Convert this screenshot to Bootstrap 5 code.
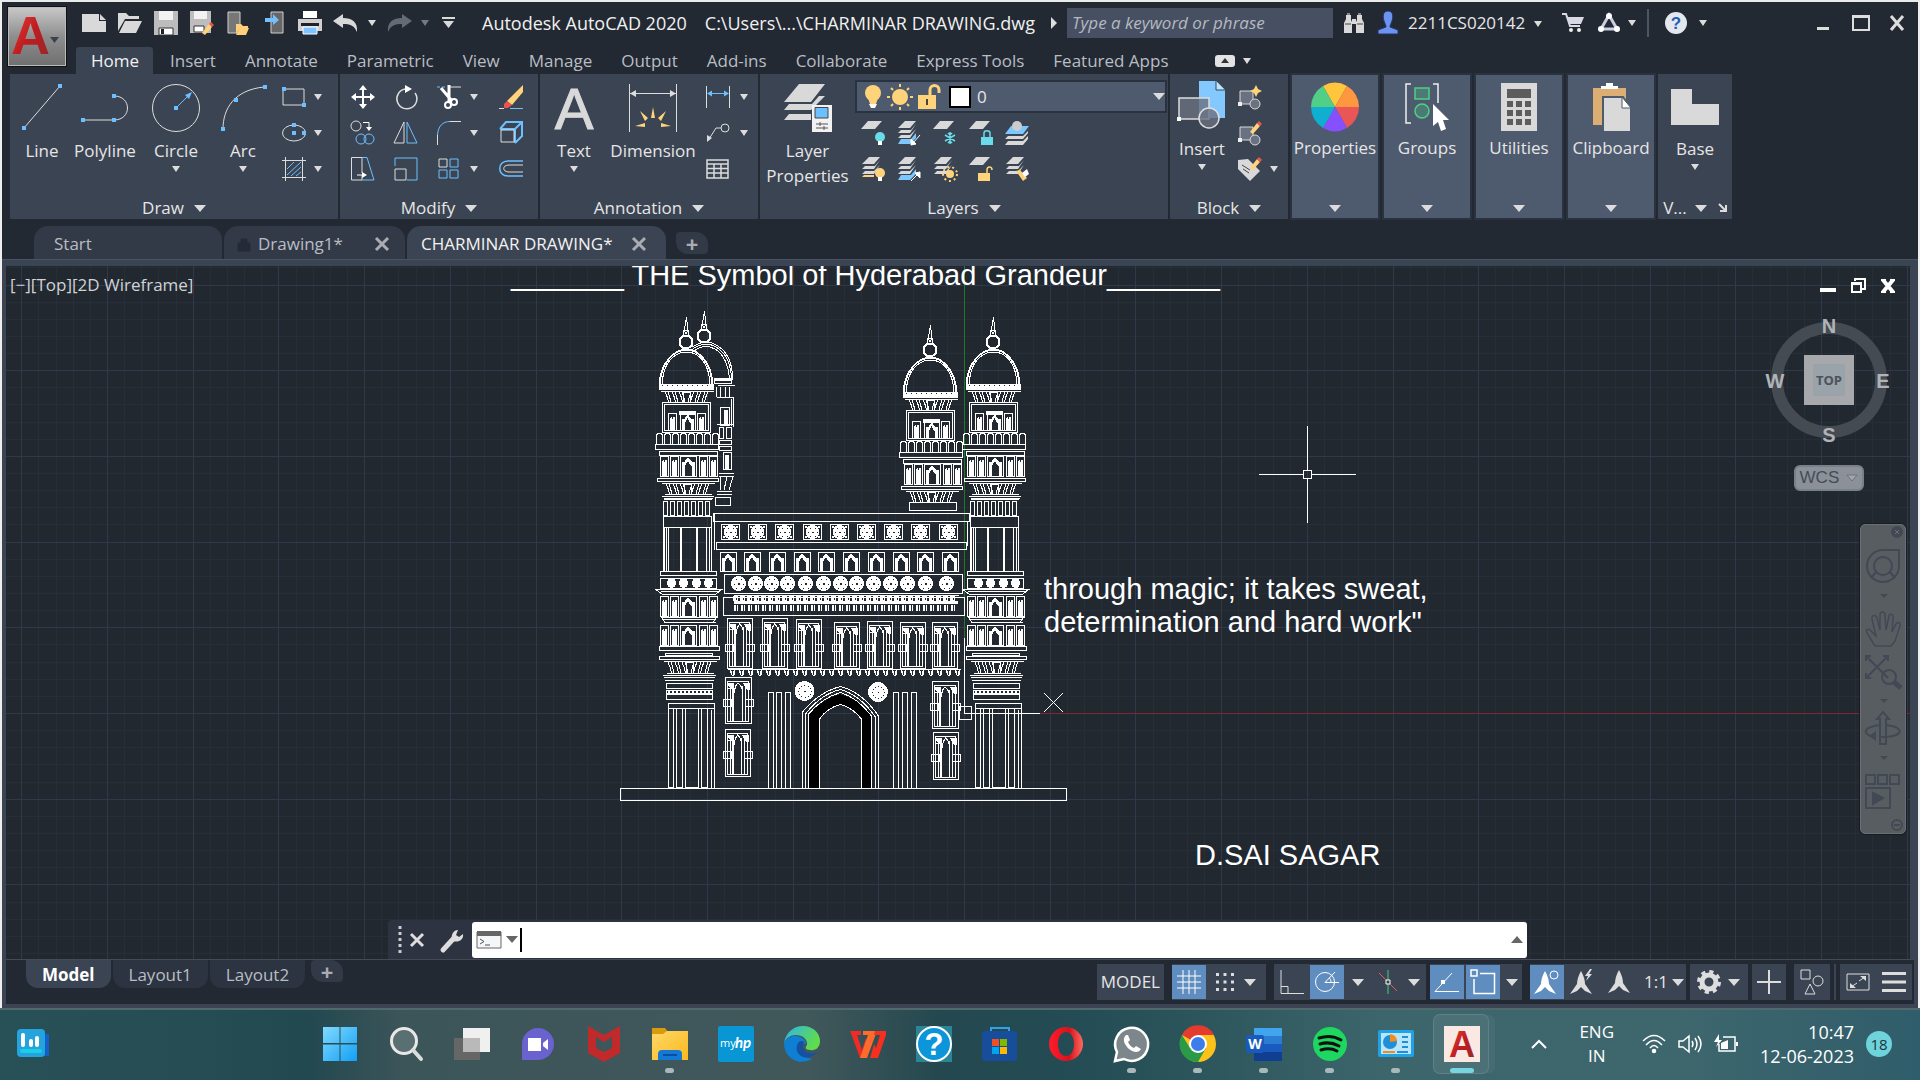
<!DOCTYPE html>
<html lang="en">
<head>
<meta charset="utf-8">
<meta name="viewport" content="width=device-width, initial-scale=1">
<title>Autodesk AutoCAD 2020 - CHARMINAR DRAWING.dwg</title>
<link href="https://cdn.jsdelivr.net/npm/bootstrap@5.3.0/dist/css/bootstrap.min.css" rel="stylesheet">
<style>
:root{--ink:#222933;--panel:#3b4453;--lift:#4e5a6e;--ui:"Open Sans","Noto Sans",sans-serif}
html,body{height:100%}
body{background:#e9eaea;font-family:var(--ui);font-size:17px;line-height:24px;color:#e6e6e6;overflow:hidden}
button{background:none;border:0;padding:0;color:inherit;font:inherit;line-height:24px}
svg{display:block;overflow:visible}
.app-window{margin-top:2px;background:var(--ink);border-left:2px solid #eee;border-right:2px solid #eee;min-height:0}
.tri{display:inline-block;width:0;height:0;border:4px solid transparent;border-top:6px solid #dcdcdc;border-bottom:0}
.tri-lg{border-width:6px;border-top-width:7px;border-bottom:0}
.tri-dim{opacity:.45}
.cell{display:flex;align-items:center;justify-content:center;flex:none}
.w14{width:14px}.w16{width:16px}.w26{width:26px}.w32{width:32px}.w34{width:34px}.w36{width:36px}.w38{width:38px}.w40{width:40px}
/* header */
.app-btn{width:60px;height:61px;margin:4px 9px 0 5px;background:linear-gradient(#c9c9c9,#8e8e8e 50%,#6f6f6f);border:1px solid #111;box-shadow:inset 0 0 0 1px #bbb}
.title-row{height:45px;font-size:18px}
.title-row>*{margin-bottom:4px}
.title-txt{padding-left:18px;color:#f0f0f0}
.search-box{width:266px;height:30px;background:#475062;border:0;color:#c9ccd2;font-style:italic;font-size:17px;padding:0 5px}
.search-box::placeholder{color:#b5b9c0;opacity:1}
.user-btn{width:140px;padding-left:3px;text-align:left;font-size:17px}
.vbar{width:2px;height:28px;background:#4b5567}
.help-list{margin-right:93px}
.tab-row{height:27px}
.tab-row a{color:#b9bdc4;text-decoration:none;padding:0 14px 0 15px;height:27px;line-height:27px}
.tab-row a.on{background:var(--panel);color:#f2f2f2;border-radius:3px 3px 0 0;margin-right:2px}
/* ribbon */
.ribbon{height:145px;padding-left:8px}
.rpanel{background:var(--panel);margin-right:2px;display:flex;flex-direction:column;flex:none}
.rbody{display:flex;flex:1}
.rtitle{height:22px;display:flex;align-items:center;justify-content:center;gap:10px;margin-bottom:0}
.big{padding-top:10px;display:flex;flex-direction:column;align-items:center;flex:none;text-align:center}
.big .lbl{margin-top:6px;line-height:25px}
.big .tri{margin-top:3px}
.p-blk .lbl,.p-view .lbl{margin-top:4px}
.p-view .big{flex:1}
.rgrid{display:grid;grid-auto-rows:36px;align-items:center;padding-top:5px;align-content:start}
.g-two{grid-template-columns:32px 16px}
.g-mod{grid-template-columns:43px 43px 33px 29px 24px;padding-left:11px}
.g-lay{grid-template-columns:repeat(5,36px);justify-items:center;padding-top:0}
.p-draw{width:328px}.p-mod{width:198px}.p-ann{width:218px}.p-lay{width:408px}.p-blk{width:118px;margin-right:4px}.p-view{width:74px}
.flat{width:86px;margin:1px 6px 1px 0;background:var(--lift);box-shadow:0 0 0 2px #2b323f;display:flex;flex-direction:column;align-items:center;padding-top:8px;flex:none}
.flat:last-of-type{margin-right:4px}
.flat .tri{margin-top:auto;margin-bottom:6px}
.flat .lbl{margin-top:5px}
.layer-pick{width:312px;height:33px;margin:6px 0 2px;background:var(--lift);border:2px solid #2b323f;padding-left:6px;gap:2px}
.layer-pick select{appearance:none;background:none;border:0;color:#e6e6e6;flex:1;height:29px;padding:0 4px}
.swatch{width:22px;height:22px;background:#fff;border:2px solid #000}
/* file tabs */
.file-tabs{height:40px;padding:7px 0 0 32px}
.ftab{height:33px;background:#323947;color:#b9bdc4;border-radius:14px 14px 0 0;padding:2px 20px 0;display:flex;align-items:center;margin-right:2px}
.ftab.on{background:var(--panel);color:#f2f2f2}
.ftab button{color:#a9adb3}
.ft1{width:188px}.ft2{width:181px;padding-left:14px;padding-right:16px}.ft3{width:259px;padding-left:14px}
.plus-tab{width:32px;height:22px;background:#323947;border-radius:4px 12px 4px 12px;color:#a9adb3;font-weight:700;line-height:20px;font-size:22px}
.strip{height:7px;background:var(--panel);border-top:1px solid #4a5364}
/* canvas */
.stage{position:relative;flex:1;min-height:0;background:#212830;border-left:4px solid var(--panel);border-right:8px solid var(--panel);border-bottom:1px solid #454b54;overflow:hidden}
#dwg{width:100%;height:100%}
.vp-label{position:absolute;left:4px;top:7px;color:#d0d2d5}
.mdi{position:absolute;right:14px;top:12px;gap:14px}
.cube{position:absolute;right:18px;top:48px}
.wcs{position:absolute;right:46px;top:199px;width:70px;height:26px;border-radius:6px;background:#8b9099;border:2px solid #7a8089;color:#454c57;font:17px/20px "Liberation Sans",sans-serif;display:flex;align-items:center;justify-content:space-around}
.navbar-v{position:absolute;right:4px;top:258px;width:46px;border-radius:5px;background:#585d62;border:1px solid #6a6f74;box-shadow:0 0 0 1px #181d24;color:#434954;padding-bottom:2px}
.cmd{position:absolute;left:382px;bottom:0;width:1139px;height:39px;background:#2d3340;border-radius:4px 4px 0 0}
.cmd-in{background:#fff;border-radius:3px;height:36px;flex:1}
.cmd-in input{border:0;outline:0;flex:1;height:24px;color:#000;border-left:2px solid #000;padding:0 4px;margin-left:2px}
/* status */
.foot{height:44px;border-left:4px solid var(--panel);border-right:4px solid var(--panel)}
.foot-edge{height:4px;background:#3c4454}
.ltab{height:28px;padding:0 16px;background:#2d3441;color:#b9bdc4;border-radius:0 0 12px 12px;margin-right:2px;line-height:29px}
.ltab.on{background:var(--panel);color:#fff;font-weight:700}
.sgrp{height:36px;background:var(--panel);display:flex;align-items:center}
.sgrp button{height:34px;display:flex;align-items:center;justify-content:center}
.sgrp .hot{background:#5f8dbf;width:34px}
.sliver{width:2px}
/* taskbar */
.taskbar{height:72px;border-top:2px solid #50696c;background:linear-gradient(90deg,#285057 0,#274d54 10%,#224850 16%,#3c5559 21%,#41585b 42%,#24484f 49%,#244c54 56%,#2c545b 62%,#3c656c 72%,#3d666d 88%,#305d6b 100%);color:#fff}
.tb{width:66px;height:68px;position:relative;display:flex;align-items:center;justify-content:center}
.tb svg{width:36px;height:36px}
.apps{margin-left:241px}
.run::after{content:"";position:absolute;left:28px;bottom:5px;width:9px;height:5px;border-radius:3px;background:#a9b8bb}
.now::before{content:"";position:absolute;inset:4px 6px 4px 4px;border-radius:7px;background:#ffffff14;border:1px solid #ffffff1c;box-shadow:7px 0 0 -1px #ffffff0c}
.now::after{content:"";position:absolute;left:21px;bottom:5px;width:24px;height:5px;border-radius:3px;background:#76d5de}
.now svg{position:relative}
.tray{gap:12px;font-size:17px;line-height:24px;height:68px}
.clock{width:104px;text-align:right;font-size:18px}
.note{width:26px;height:26px;border-radius:50%;background:#6fd3dc;color:#17333a;font-size:15px}
</style>
<script src="https://cdn.jsdelivr.net/npm/bootstrap@5.3.0/dist/js/bootstrap.bundle.min.js"></script>
</head>
<body class="d-flex flex-column">
<svg width="0" height="0" class="position-absolute" aria-hidden="true">
<defs>
<linearGradient id="redA" x1="0" y1="0" x2="1" y2="1"><stop offset="0" stop-color="#e8483f"/><stop offset=".5" stop-color="#c01c20"/><stop offset="1" stop-color="#8e2b2c"/></linearGradient>
<linearGradient id="edge1" x1="0" y1="0" x2="1" y2=".4"><stop offset="0" stop-color="#2fb4ee"/><stop offset="1" stop-color="#5fdc4c"/></linearGradient>
<linearGradient id="win1" x1="0" y1="0" x2="1" y2="1"><stop offset="0" stop-color="#82d9ff"/><stop offset="1" stop-color="#12a0f5"/></linearGradient>
<linearGradient id="fold" x1="0" y1="0" x2="1" y2="1"><stop offset="0" stop-color="#ffd869"/><stop offset="1" stop-color="#fbb91d"/></linearGradient>
<linearGradient id="opera1" x1="0" y1="0" x2="1" y2="0"><stop offset="0" stop-color="#ff1b2d"/><stop offset=".6" stop-color="#d5141b"/><stop offset="1" stop-color="#ff6a63"/></linearGradient>
<g id="sheet"><path d="M8 0H22L15 8H1Z" fill="#d9d9d9"/></g>
<g id="stack"><path d="M8 0H19L13 7H1Z M4 9H14L19 3 L13 12H1Z M4 14H13L19 8 13 17H1Z" fill="#d9d9d9"/></g>
<g id="pencil"><path d="M0 10 L7 1 L10 4 L3 12Z" fill="#ffd37a"/><path d="M7 1L9-1 12 2 10 4Z" fill="#e8544f"/></g>
<g id="refblk"><path d="M2 4H15V17H2Z" fill="#6a7180" stroke="#d9d9d9"/><circle cx="17" cy="17" r="5" fill="#6a7180" stroke="#d9d9d9"/><path d="M0 15h4v4h-4z" fill="#eee"/></g>
<g id="rocket"><path d="M12 0C15 5 16 10 16 13L23 23 16 20 12 16 8 20 1 23 8 13C8 10 9 5 12 0Z"/></g>
</defs>
</svg>

<main class="app-window d-flex flex-column flex-grow-1">
<header>
 <div class="d-flex">
  <button class="app-btn cell" aria-label="Application menu">
   <svg width="52" height="52" viewBox="0 0 52 52"><text x="0" y="43" font-family="Liberation Sans,sans-serif" font-weight="700" font-size="54" fill="url(#redA)">A</text><path d="M39 26h9l-4.500 6z" fill="#3a4150"/></svg>
  </button>
  <div class="flex-grow-1">
   <div class="title-row d-flex align-items-center">
    <button class="cell w36" aria-label="New"><svg width="24" height="20" viewBox="0 0 24 20"><path d="M0 1H17V8H24V19H0Z M18 1L24 7H18Z" fill="#d9d9d9"/></svg></button>
    <button class="cell w36" aria-label="Open"><svg width="24" height="20" viewBox="0 0 24 20"><path d="M0 0H8L11 3H21V6H7L0 18Z M7 8H24L18 20H1Z" fill="#d9d9d9"/></svg></button>
    <button class="cell w36" aria-label="Save"><svg width="24" height="24" viewBox="0 0 24 24"><path d="M0 0H24V24H0Z" fill="#bdbdbd"/><path d="M5 0H19V9H5Z" fill="#f2f2f2"/><path d="M5 17H19V24H5Z" fill="#fff" stroke="#333"/><path d="M7 18h3v5h-3z" fill="#222"/></svg></button>
    <button class="cell w36" aria-label="Save as"><svg width="24" height="24" viewBox="0 0 24 24"><path d="M0 0H21V22H0Z" fill="#bdbdbd"/><path d="M4 0H17V8H4Z" fill="#f2f2f2"/><path d="M4 15H14V21H4Z" fill="#fff" stroke="#333"/><use href="#pencil" x="12" y="12"/></svg></button>
    <button class="cell w36" aria-label="Open from web"><svg width="24" height="24" viewBox="0 0 24 24"><path d="M2 1H14V22H2Z" fill="#777" stroke="#d0d0d0"/><path d="M10 13H15L17 15H22V17H14L10 23Z M14 17H23L20 24H10Z" fill="#ffd07a"/></svg></button>
    <button class="cell w36" aria-label="Save to web"><svg width="24" height="24" viewBox="0 0 24 24"><path d="M9 1H21V22H9Z" fill="#666" stroke="#d0d0d0"/><path d="M3 7H11V3L17 9 11 14V11H3Z" fill="#74c0ff"/></svg></button>
    <button class="cell w36" aria-label="Plot"><svg width="24" height="24" viewBox="0 0 24 24"><path d="M5 0H19V7H5Z" fill="#fff"/><path d="M0 8H24V20H0Z" fill="#d0d0d0"/><path d="M3 12H21V15H3Z" fill="#222"/><path d="M5 16H19V23H5Z" fill="#7fc4ff" stroke="#fff"/></svg></button>
    <button class="cell w36" aria-label="Undo"><svg width="26" height="20" viewBox="0 0 26 20"><path d="M0 8L10 1V5C19 5 25 9 24 19 21 12 17 11 10 11V15Z" fill="#d9d9d9"/></svg></button>
    <button class="cell w16" aria-label="Undo list"><span class="tri"></span></button>
    <button class="cell w38" aria-label="Redo"><svg width="26" height="20" viewBox="0 0 26 20"><path d="M26 8L16 1V5C7 5 1 9 2 19 5 12 9 11 16 11V15Z" fill="#656a73"/></svg></button>
    <button class="cell w14" aria-label="Redo list"><span class="tri tri-dim"></span></button>
    <button class="cell w32" aria-label="Customize toolbar"><svg width="13" height="11" viewBox="0 0 13 11"><path d="M0 0H13V2H0Z M1 4H12L6.500 11Z" fill="#d9d9d9"/></svg></button>
    <span class="title-txt">Autodesk AutoCAD 2020</span><span class="title-txt">C:\Users\...\CHARMINAR DRAWING.dwg</span>
    <div class="d-flex align-items-center ms-auto">
     <button class="cell w26" aria-label="Toggle search"><svg width="6" height="12" viewBox="0 0 6 12"><path d="M0 0L6 6 0 12Z" fill="#ddd"/></svg></button>
     <input class="search-box me-1" type="text" placeholder="Type a keyword or phrase" aria-label="Type a keyword or phrase">
     <button class="cell w34" aria-label="Search"><svg width="22" height="22" viewBox="0 0 22 22"><path d="M3 3H8V8L9 10V21H1V11L3 7Z M14 3H19V7L21 11V21H13V10L14 8Z M9 7h4v5h-4z" fill="#d9d9d9"/><path d="M2 12h6M14 12h6" stroke="#444"/><path d="M4 1h3v2h-3zM15 1h3v2h-3z" fill="#888"/></svg></button>
     <button class="cell w34" aria-label="Account"><svg width="22" height="23" viewBox="0 0 22 23"><path d="M11 0C17 0 16 7 15 10 14 13 13 14 13 16L21 19V23H1V19L9 16C9 14 8 13 7 10 6 7 5 0 11 0Z" fill="#6d93f0" stroke="#23336b"/></svg></button>
     <button class="user-btn">2211CS020142 <span class="tri align-middle ms-1"></span></button>
     <button class="cell w40 ms-2" aria-label="Store"><svg width="22" height="20" viewBox="0 0 22 20"><path d="M0 1H4L8 13H18" fill="none" stroke="#d9d9e6" stroke-width="2"/><path d="M5 4H22L19 11H8Z" fill="#d9d9e6"/><circle cx="9" cy="17" r="2" fill="#eee"/><circle cx="17" cy="17" r="2" fill="#eee"/></svg></button>
     <button class="cell w32" aria-label="Autodesk App Store"><svg width="22" height="20" viewBox="0 0 22 20"><path d="M11 2L19 16H3Z" fill="none" stroke="#c9cfe0" stroke-width="3"/><circle cx="11" cy="3" r="3" fill="#fff"/><circle cx="3" cy="16" r="3" fill="#fff"/><circle cx="19" cy="16" r="3" fill="#fff"/></svg></button>
     <button class="cell w14" aria-label="App list"><span class="tri"></span></button>
     <span class="vbar mx-2"></span>
     <button class="cell w38" aria-label="Help"><svg width="22" height="22" viewBox="0 0 22 22"><circle cx="11" cy="11" r="11" fill="#e4e8ee"/><text x="11" y="17" text-anchor="middle" font-size="17" font-weight="700" font-family="Liberation Sans,sans-serif" fill="#1d5fb8">?</text></svg></button>
     <button class="cell w16 help-list" aria-label="Help list"><span class="tri"></span></button>
     <button class="cell w38" aria-label="Minimize"><svg width="12" height="16" viewBox="0 0 12 16"><path d="M0 12h12v3H0z" fill="#ddd"/></svg></button>
     <button class="cell w38" aria-label="Maximize"><svg width="18" height="16" viewBox="0 0 18 16"><path d="M1 2H17V15H1Z" fill="none" stroke="#ddd" stroke-width="2"/><path d="M0 0h18v3H0z" fill="#ddd"/></svg></button>
     <button class="cell w34 me-1" aria-label="Close"><svg width="14" height="14" viewBox="0 0 14 14"><path d="M1 0L13 14M13 0L1 14" stroke="#ddd" stroke-width="3"/></svg></button>
    </div>
   </div>
   <nav class="tab-row d-flex" aria-label="Ribbon tabs">
    <a href="#" class="on">Home</a><a href="#">Insert</a><a href="#">Annotate</a><a href="#">Parametric</a><a href="#">View</a><a href="#">Manage</a><a href="#">Output</a><a href="#">Add-ins</a><a href="#">Collaborate</a><a href="#">Express Tools</a><a href="#">Featured Apps</a>
    <button class="cell ms-4 ps-2 gap-2" aria-label="Minimize ribbon"><svg width="20" height="12" viewBox="0 0 20 12"><rect width="20" height="12" rx="3" fill="#e3e3e3"/><path d="M6 8L10 3 14 8Z" fill="#333"/></svg><span class="tri"></span></button>
   </nav>
  </div>
 </div>
 <div class="ribbon d-flex">
  <section class="rpanel p-draw"><div class="rbody">
   <button class="big" style="width:64px"><svg width="48" height="48" viewBox="0 0 48 48"><path d="M6 44L42 2" stroke="#ddd"/><path d="M4 42h4v4h-4zM40 0h4v4h-4z" fill="#6cc0ff"/></svg><span class="lbl">Line</span></button>
   <button class="big" style="width:62px"><svg width="48" height="48" viewBox="0 0 48 48"><path d="M2 36H33C51 36 51 12 33 12" fill="none" stroke="#ddd"/><path d="M0 34h4v4h-4zM31 34h4v4h-4zM31 10h4v4h-4z" fill="#6cc0ff"/></svg><span class="lbl">Polyline</span></button>
   <button class="big" style="width:80px"><svg width="48" height="48" viewBox="0 0 48 48"><circle cx="24" cy="24" r="23.500" fill="none" stroke="#ddd"/><path d="M24 24L38 10" stroke="#6cc0ff"/><path d="M22 22h4v4h-4zM40 8L33 11 37 15Z" fill="#6cc0ff"/></svg><span class="lbl">Circle</span><span class="tri"></span></button>
   <button class="big" style="width:54px"><svg width="48" height="48" viewBox="0 0 48 48"><path d="M4 45C4 25 15 6 45 3" fill="none" stroke="#ddd"/><path d="M2 43h4v4h-4zM15 14h4v4h-4zM44 1h4v4h-4z" fill="#6cc0ff"/></svg><span class="lbl">Arc</span><span class="tri"></span></button>
   <div class="rgrid g-two ps-2 ms-1">
    <svg width="24" height="20" viewBox="0 0 24 20"><path d="M1 2H22V18H1Z" fill="none" stroke="#ddd"/><path d="M0 0h4v4h-4zM20 16h4v4h-4z" fill="#6cc0ff"/></svg><span class="tri"></span>
    <svg width="24" height="18" viewBox="0 0 24 18"><ellipse cx="12" cy="9" rx="11.500" ry="8" fill="none" stroke="#ddd"/><path d="M10 7h4v4h-4zM10-1h4v4h-4zM20 7h4v4h-4z" fill="#6cc0ff"/></svg><span class="tri"></span>
    <svg width="24" height="24" viewBox="0 0 24 24"><path d="M0 3.500H24M0 20.500H24M3.500 0V24M20.500 0V24" stroke="#ddd"/><path d="M5 12L12 5M5 18L19 5M9 19L19 10M14 19L19 15" stroke="#6cc0ff"/></svg><span class="tri"></span>
   </div></div><div class="rtitle">Draw <span class="tri tri-lg"></span></div></section>

  <section class="rpanel p-mod"><div class="rbody"><div class="rgrid g-mod">
    <svg width="24" height="24" viewBox="0 0 24 24"><path d="M12 0L16 5H13V11H19V8L24 12 19 16V13H13V19H16L12 24 8 19H11V13H5V16L0 12 5 8V11H11V5H8Z" fill="#fff"/></svg>
    <svg width="24" height="24" viewBox="0 0 24 24"><path d="M11 4A10 10 0 1 0 21 8" fill="none" stroke="#ddd" stroke-width="1.500"/><path d="M11 0L18 4 11 8Z" fill="#fff"/></svg>
    <svg width="24" height="24" viewBox="0 0 24 24"><path d="M0 2H10" stroke="#6cc0ff" stroke-dasharray="3 2"/><path d="M13 2H24" stroke="#ddd"/><path d="M4 3L15 16M12 0V18" stroke="#fff" stroke-width="3"/><circle cx="11" cy="20" r="3" fill="none" stroke="#fff" stroke-width="2"/><circle cx="17" cy="17" r="3" fill="none" stroke="#fff" stroke-width="2"/></svg><span class="tri"></span>
    <svg width="24" height="24" viewBox="0 0 24 24"><path d="M24 0V7L13 20 8 16Z" fill="#ffd37a"/><path d="M8 16L13 20 9 23H5V19Z" fill="#e8544f"/><path d="M0 23.500H5" stroke="#ddd"/><path d="M11 23.500H24" stroke="#6cc0ff"/></svg>
    <svg width="24" height="24" viewBox="0 0 24 24"><circle cx="5" cy="5" r="5" fill="none" stroke="#ddd"/><circle cx="10" cy="18" r="5" fill="none" stroke="#6cc0ff"/><circle cx="18" cy="18" r="5" fill="none" stroke="#6cc0ff"/><path d="M12 1.500H18V7" fill="none" stroke="#fff"/><path d="M15 6h6l-3 4z" fill="#fff"/></svg>
    <svg width="24" height="24" viewBox="0 0 24 24"><path d="M10 1V22H0Z" fill="none" stroke="#ddd"/><path d="M13 1V22H23Z" fill="none" stroke="#6cc0ff"/></svg>
    <svg width="24" height="24" viewBox="0 0 24 24"><path d="M.5 24V14" stroke="#ddd"/><path d="M.5 14C1 5 6 .5 13 .5" fill="none" stroke="#6cc0ff"/><path d="M13 .5H24" stroke="#ddd"/></svg><span class="tri"></span>
    <svg width="24" height="24" viewBox="0 0 24 24"><path d="M1 8L7 1H23V15L16 22M1 8H16L23 1M16 8V22" fill="none" stroke="#6cc0ff" stroke-width="2"/><path d="M2 9H15V21H2Z" fill="none" stroke="#ddd"/></svg>
    <svg width="24" height="24" viewBox="0 0 24 24"><path d="M11 18V23H.5V.5H11V16" fill="none" stroke="#ddd"/><path d="M11 .5H16L23 23H11" fill="none" stroke="#6cc0ff"/><path d="M6 18H12" stroke="#fff"/><path d="M11 15l5 3-5 3z" fill="#fff"/></svg>
    <svg width="24" height="24" viewBox="0 0 24 24"><path d="M1 9V1H23V23H13" fill="none" stroke="#6cc0ff"/><path d="M1 12H12V23H1Z" fill="none" stroke="#ddd"/></svg>
    <svg width="24" height="24" viewBox="0 0 24 24"><path d="M2 2H10V10H2Z" fill="none" stroke="#ddd"/><path d="M13 2H21V10H13ZM2 13H10V21H2ZM13 13H21V21H13Z" fill="none" stroke="#6cc0ff"/></svg><span class="tri"></span>
    <svg width="24" height="24" viewBox="0 0 24 24"><path d="M24 4H9C-2 4-2 19 9 19H24" fill="none" stroke="#6cc0ff" stroke-width="1.500"/><path d="M24 8H10C3 8 3 15 10 15H24" fill="none" stroke="#ddd"/></svg>
   </div></div><div class="rtitle">Modify <span class="tri tri-lg"></span></div></section>

  <section class="rpanel p-ann"><div class="rbody">
   <button class="big" style="width:68px"><svg width="44" height="48" viewBox="0 0 44 48"><text x="22" y="45" text-anchor="middle" font-size="58" font-family="Liberation Sans,sans-serif" fill="#d9d9d9" stroke="#d9d9d9">A</text></svg><span class="lbl">Text</span><span class="tri"></span></button>
   <button class="big" style="width:90px"><svg width="48" height="48" viewBox="0 0 48 48"><path d="M.5 0V48M47.500 0V48M1 9.500H47" stroke="#ddd"/><path d="M1 9.500L7 6V13ZM47 9.500L41 6V13Z" fill="#ddd"/><path d="M24 23L26 34H22ZM11 27L19 34 16 37ZM37 27L32 37 29 34ZM6 42L16 39V43ZM42 42L32 39V43Z" fill="#ffd37a"/></svg><span class="lbl">Dimension</span></button>
   <div class="rgrid g-two ps-2" style="grid-template-columns:34px 16px">
    <svg width="24" height="22" viewBox="0 0 24 22"><path d="M.5 0V22M23.500 0V22" stroke="#ddd"/><path d="M2 7.500H22" stroke="#6cc0ff"/><path d="M1 7.500l5-3v6zM23 7.500l-5-3v6z" fill="#6cc0ff"/></svg><span class="tri"></span>
    <svg width="24" height="20" viewBox="0 0 24 20"><circle cx="19" cy="5" r="4" fill="none" stroke="#ddd"/><path d="M15 5H10L3 16" fill="none" stroke="#ddd"/><path d="M1 19V12L6 15Z" fill="#ddd"/></svg><span class="tri"></span>
    <svg width="24" height="20" viewBox="0 0 24 20"><path d="M1 1H22V19H1ZM1 5H22M1 9.500H22M1 14H22M8 5V19M15 5V19" fill="none" stroke="#ddd" stroke-width="1.500"/></svg>
   </div></div><div class="rtitle">Annotation <span class="tri tri-lg"></span></div></section>

  <section class="rpanel p-lay"><div class="rbody">
   <button class="big" style="width:95px"><svg width="48" height="48" viewBox="0 0 48 48"><path d="M15 0H41L27 18H0Z M5 20H28L35 12H41L27 26H0Z M5 30H27V36H0Z" fill="#d9d9d9"/><path d="M28 21H48V48H28Z" fill="#f2f2f2"/><path d="M31 23.500H44V34H31Z" fill="#6cc0ff" stroke="#444"/><path d="M32 40H44M32 44H44M36 38v4M40 42v4" stroke="#555"/></svg><span class="lbl">Layer<br>Properties</span></button>
   <div>
    <div class="layer-pick d-flex align-items-center">
     <svg width="84" height="26" viewBox="0 0 84 26"><circle cx="10" cy="9" r="8" fill="#ffd37a"/><path d="M5 14h10l-2 6h-6z" fill="#ffd37a"/><path d="M6 20h8l-2 4h-4z" fill="#fff"/><circle cx="37" cy="13" r="8" fill="#ffd37a"/><path d="M37 0v3M37 23v3M24 13h3M47 13h3M28 4l2 2M46 4l-2 2M28 22l2-2M46 22l-2-2" stroke="#ffd37a" stroke-width="2"/><path d="M55 11H73V25H55Z" fill="#ffd37a"/><path d="M67 11V6C67 0 76 0 76 6V9" fill="none" stroke="#ffd37a" stroke-width="3"/><path d="M64 15v6" stroke="#444" stroke-width="2"/></svg>
     <span class="swatch"></span>
     <select aria-label="Layer"><option>0</option></select><span class="tri tri-lg"></span>
    </div>
    <div class="rgrid g-lay">
     <svg width="24" height="24" viewBox="0 0 24 24"><use href="#sheet" x="-1"/><circle cx="19" cy="16" r="5" fill="#6adbe8"/><path d="M17 20h4v4h-4z" fill="#fff"/></svg>
     <svg width="24" height="24" viewBox="0 0 24 24"><use href="#stack"/><path d="M4 18H14L19 12V17L13 23H1Z" fill="#7cc7ff"/><path d="M23 14L16 22M14 24V18L19 23Z" stroke="#fff" fill="#fff"/></svg>
     <svg width="24" height="24" viewBox="0 0 24 24"><use href="#sheet" x="-1"/><path d="M17 11V23M12 14L22 20M22 14L12 20M15 12l2 2 2-2M15 22l2-2 2 2" stroke="#6adbe8" stroke-width="1.500" fill="none"/></svg>
     <svg width="24" height="24" viewBox="0 0 24 24"><use href="#sheet" x="-1"/><path d="M12 16H24V24H12Z" fill="#6adbe8"/><path d="M15 16V12C15 9 21 9 21 12V16" fill="none" stroke="#6adbe8" stroke-width="1.500"/></svg>
     <svg width="24" height="24" viewBox="0 0 24 24"><path d="M6 5H24L18 13H0Z" fill="#7cc7ff"/><path d="M3 15H18L23 10V12L18 18H0ZM3 20H18L23 15V18L18 24H0Z" fill="#d9d9d9"/><circle cx="12" cy="5" r="5" fill="#ccc"/></svg>
     <svg width="24" height="24" viewBox="0 0 24 24"><use href="#stack"/><path d="M3 18H13V20H1Z" fill="#ffd37a"/><circle cx="19" cy="16" r="5" fill="#ffd37a"/><path d="M17 20h4v4h-4z" fill="#fff"/></svg>
     <svg width="24" height="24" viewBox="0 0 24 24"><use href="#stack"/><path d="M4 18H14L19 12V17L13 23H1Z" fill="#7cc7ff"/><path d="M14 24L21 17M23 15V21L18 16Z" stroke="#fff" fill="#fff"/></svg>
     <svg width="24" height="24" viewBox="0 0 24 24"><use href="#stack"/><circle cx="17" cy="17" r="4" fill="#ffd37a"/><circle cx="17" cy="17" r="7" fill="none" stroke="#ffd37a" stroke-width="2" stroke-dasharray="2 3"/></svg>
     <svg width="24" height="24" viewBox="0 0 24 24"><use href="#sheet" x="-1"/><path d="M9 16H21V24H9Z" fill="#ffd37a"/><path d="M18 16V13C18 9 23 9 23 13" fill="none" stroke="#ffd37a" stroke-width="1.500"/></svg>
     <svg width="24" height="24" viewBox="0 0 24 24"><use href="#stack"/><path d="M11 14L15 13 22 21 18 24Z" fill="#ffd37a"/><path d="M17 16L22 12 24 17 20 20Z" fill="#fff"/></svg>
    </div>
   </div></div><div class="rtitle">Layers <span class="tri tri-lg"></span></div></section>

  <section class="rpanel p-blk"><div class="rbody">
   <button class="big" style="width:64px"><svg width="48" height="48" viewBox="0 0 48 48"><path d="M21-3H38L47 6V34H21Z" fill="#83c9ff"/><path d="M38-3V6H47" fill="#bfe5ff" stroke="#3b4453"/><path d="M1 14H31V35H1Z" fill="#6a7180cc" stroke="#ddd" stroke-width="1.500"/><circle cx="31" cy="34" r="10" fill="#6a7180cc" stroke="#ddd" stroke-width="1.500"/><path d="M-1 33h4v4h-4z" fill="#fff"/></svg><span class="lbl">Insert</span><span class="tri"></span></button>
   <div class="rgrid g-two ps-1">
    <svg width="24" height="24" viewBox="0 0 24 24"><use href="#refblk" y="2"/><path d="M18 0L20 4 24 6 20 8 18 12 16 8 12 6 16 4Z" fill="#ffd37a"/></svg><span></span>
    <svg width="24" height="24" viewBox="0 0 24 24"><use href="#refblk" y="2"/><use href="#pencil" x="12" y="1"/></svg><span></span>
    <svg width="24" height="24" viewBox="0 0 24 24"><path d="M0 3L10 2 22 14 12 24 0 12Z" fill="#d9d9d9"/><path d="M5 12L11 16M4 8L12 13" stroke="#444"/><use href="#pencil" x="12" y="1"/></svg><span class="tri"></span>
   </div></div><div class="rtitle">Block <span class="tri tri-lg"></span></div></section>

  <button class="flat"><svg width="48" height="48" viewBox="-24 -24 48 48"><path d="M0 0V0L-12 -21A24 24 0 0 1 12 -21Z" fill="#ffc53d"/><path d="M0 0L12-21A24 24 0 0 1 24 0Z" fill="#ff9640"/><path d="M0 0H24A24 24 0 0 1 12 21Z" fill="#e85656"/><path d="M0 0L12 21A24 24 0 0 1-12 21Z" fill="#8650ff"/><path d="M0 0L-12 21A24 24 0 0 1-24 0Z" fill="#10aed0"/><path d="M0 0H-24A24 24 0 0 1-12-21Z" fill="#52cf87"/></svg><span class="lbl">Properties</span><span class="tri tri-lg"></span></button>
  <button class="flat"><svg width="48" height="48" viewBox="0 0 48 48"><path d="M8 1H3V40H8M30 1H35V20" fill="none" stroke="#eee" stroke-width="1.500"/><path d="M12 5H26V16H12Z" fill="#4c7a74" stroke="#4fd087" stroke-width="1.500"/><circle cx="19" cy="28" r="7" fill="#4c7a74" stroke="#4fd087" stroke-width="1.500"/><path d="M30 21L46 37H40L43 46 38 48 35 39 30 43Z" fill="#fff"/></svg><span class="lbl">Groups</span><span class="tri tri-lg"></span></button>
  <button class="flat"><svg width="48" height="48" viewBox="0 0 48 48"><path d="M6 0H42V48H6Z" fill="#d9d9d9"/><path d="M12 6H36V15H12ZM12 18h6v6h-6zM21 18h6v6h-6zM30 18h6v6h-6zM12 27h6v6h-6zM21 27h6v6h-6zM30 27h6v6h-6zM12 36h6v6h-6zM21 36h6v6h-6zM30 36h6v6h-6z" fill="#5c5c5c"/></svg><span class="lbl">Utilities</span><span class="tri tri-lg"></span></button>
  <button class="flat"><svg width="48" height="48" viewBox="0 0 48 48"><path d="M6 5H39V42H6Z" fill="#dcae74"/><path d="M14 6V3H19V0H26V3H31V6Z" fill="#fff"/><path d="M16 14H36L44 25V49H16Z" fill="#d9d9d9" stroke="#4e5a6e" stroke-width="2"/><path d="M35 14V25H44Z" fill="#fff" stroke="#4e5a6e"/></svg><span class="lbl">Clipboard</span><span class="tri tri-lg"></span></button>
  <section class="rpanel p-view"><button class="big"><svg width="48" height="48" viewBox="0 0 48 48"><path d="M0 5H21V20H48V41H0Z" fill="#d9d9d9"/></svg><span class="lbl">Base</span><span class="tri"></span></button><div class="rtitle gap-2">V...<span class="tri tri-lg"></span><svg class="ms-1" width="8" height="8" viewBox="0 0 8 8"><path d="M0 0L7 7M7 1V7H1" fill="none" stroke="#ddd" stroke-width="2"/></svg></div></section>
 </div>
 <div class="file-tabs d-flex align-items-center">
  <div class="ftab ft1">Start</div>
  <div class="ftab ft2"><svg width="12" height="14" viewBox="0 0 12 14" class="me-2"><path d="M0 6H12V14H0ZM3 6V2H9V6" fill="#252b36" stroke="#252b36"/></svg>Drawing1*<button class="ms-auto" aria-label="Close Drawing1"><svg width="14" height="14" viewBox="0 0 14 14"><path d="M1 1L13 13M13 1L1 13" stroke="#a9adb3" stroke-width="3"/></svg></button></div>
  <div class="ftab ft3 on">CHARMINAR DRAWING*<button class="ms-auto" aria-label="Close CHARMINAR DRAWING"><svg width="14" height="14" viewBox="0 0 14 14"><path d="M1 1L13 13M13 1L1 13" stroke="#a9adb3" stroke-width="3"/></svg></button></div>
  <button class="plus-tab ms-2" aria-label="New drawing">+</button>
 </div>
 <div class="strip"></div>
</header>

<div class="stage">
 <svg id="dwg" viewBox="6 266 1904 694" preserveAspectRatio="xMinYMin slice" shape-rendering="crispEdges" role="img" aria-label="Charminar elevation">
  <g id="gridlines"></g><g id="building" fill="none" stroke="#fff"></g>
  <g fill="#fff" font-family="Liberation Sans,Arial,sans-serif" font-size="29">
   <text x="511" y="285">_______ THE Symbol of Hyderabad Grandeur_______</text>
   <text x="1044" y="599">through magic; it takes sweat,</text><text x="1044" y="632">determination and hard work"</text>
   <text x="1195" y="865">D.SAI SAGAR</text>
  </g>
 </svg>
 <div class="vp-label">[−][Top][2D Wireframe]</div>
 <div class="mdi d-flex align-items-center">
  <button aria-label="Minimize drawing"><svg width="16" height="16" viewBox="0 0 16 16"><path d="M0 10h16v4H0z" fill="#fff"/></svg></button>
  <button aria-label="Restore drawing"><svg width="16" height="16" viewBox="0 0 16 16"><path d="M5 3V1H15V11H12M2 6H11V14H2Z" fill="none" stroke="#fff" stroke-width="2"/><path d="M1 4h11v3H1z" fill="#fff"/></svg></button>
  <button aria-label="Close drawing"><svg width="16" height="16" viewBox="0 0 16 16"><path d="M3 2L13 14M13 2L3 14" stroke="#fff" stroke-width="4"/><path d="M1 2h5M10 2h5M1 14h5M10 14h5" stroke="#fff" stroke-width="2"/></svg></button>
 </div>
 <svg class="cube" width="126" height="132" viewBox="0 0 126 132"><circle cx="63" cy="66" r="52" fill="none" stroke="#454b53" stroke-width="12"/><path d="M38 41H88V91H38Z" fill="#a6a8ac"/><path d="M47 50H79V82H47Z" fill="#9aa2aa"/><text x="63" y="71" text-anchor="middle" font-size="13" font-weight="700" fill="#4c525b" font-family="Open Sans,sans-serif">TOP</text><g fill="#b0b3b7" font-size="20" font-weight="700" text-anchor="middle" font-family="Liberation Sans,sans-serif"><text x="63" y="19">N</text><text x="63" y="128">S</text><text x="9" y="74">W</text><text x="117" y="74">E</text></g></svg>
 <button class="wcs">WCS <svg width="12" height="8" viewBox="0 0 12 8"><path d="M1 1H11L6 7Z" fill="#a2a7ae" stroke="#6d737d"/></svg></button>
 <div class="navbar-v">
  <svg width="44" height="306" viewBox="0 0 44 306" fill="none" stroke="#434954" stroke-width="2">
   <circle cx="36" cy="7" r="5" fill="#434954"/><path d="M34 5l4 4M38 5l-4 4" stroke="#6a6f74" stroke-width="1"/>
   <path d="M22 25H38V41A16 16 0 1 1 22 25Z"/><circle cx="22" cy="41" r="9"/><path d="M15 47L10 53M29 47L34 53"/>
   <path d="M19 69H27L23 73Z" fill="#434954" stroke="none"/>
   <path d="M14 121L6 108C4 104 8 103 10 106L15 111 11 94C10 90 15 89 16 93L19 105 19 90C19 86 24 86 24 90L25 105 28 91C29 88 33 89 32 93L31 107 35 99C37 96 40 98 39 101L34 116 30 121Z" stroke-width="1.500"/>
   <path d="M5 131L27 153M27 131L5 153M5 136V131H10M22 131H27V136M5 148V153H10"/><circle cx="28" cy="152" r="7"/><path d="M33 157L40 163" stroke-width="5"/>
   <path d="M19 174H27L23 178ZM19 231H27L23 235Z" fill="#434954" stroke="none"/>
   <path d="M19 219V194H16L22 187 28 194H25V219ZM19 200C3 202 0 208 12 212M25 200C44 202 44 212 20 212" stroke-width="2"/><path d="M8 211L15 206V216Z" fill="#434954" stroke="none"/>
   <path d="M5 250H14V259H5ZM17 250H26V259H17ZM29 250H38V259H29ZM5 263H29V283H5Z"/><path d="M12 268L22 273 12 279Z" fill="#434954"/>
   <circle cx="36" cy="300" r="5"/><path d="M33 300h6"/>
  </svg>
 </div>
 <div class="cmd d-flex align-items-center">
  <svg class="ms-2 me-1" width="6" height="28" viewBox="0 0 6 28"><path d="M4 0V28" stroke="#ccc" stroke-width="3" stroke-dasharray="3 3"/></svg>
  <button class="ms-1 me-3" aria-label="Close command line"><svg width="14" height="14" viewBox="0 0 14 14"><path d="M1 1L13 13M13 1L1 13" stroke="#ddd" stroke-width="3"/></svg></button>
  <button class="me-2" aria-label="Customize command line"><svg width="24" height="24" viewBox="0 0 22 24"><path d="M2 22L13 10" stroke="#ddd" stroke-width="5" stroke-linecap="round"/><path d="M12 13C9 8 12 2 17 2L15 7 18 9 22 6C23 12 17 15 12 13Z" fill="#ddd"/></svg></button>
  <div class="cmd-in d-flex align-items-center px-1">
   <svg width="26" height="18" viewBox="0 0 26 18"><path d="M1 1H25V17H1Z" fill="#f4f6f8" stroke="#666"/><path d="M1 0H25V5H1Z" fill="#666"/><path d="M4 8L8 10.500 4 13M9 14H14" fill="none" stroke="#555"/></svg>
   <svg class="ms-1" width="12" height="7" viewBox="0 0 12 7"><path d="M0 0H12L6 7Z" fill="#666"/></svg>
   <input type="text" aria-label="Command line"><svg width="12" height="7" viewBox="0 0 12 7"><path d="M0 7H12L6 0Z" fill="#666"/></svg>
  </div>
 </div>
</div>

<footer>
 <div class="foot d-flex align-items-start">
  <div class="d-flex ms-3 ps-1"><button class="ltab on">Model</button><button class="ltab">Layout1</button><button class="ltab">Layout2</button><button class="plus-tab ms-1" aria-label="New layout">+</button></div>
  <div class="d-flex ms-auto pt-1 gap-1" style="margin-right:2px">
   <div class="sgrp px-1 me-1"><button>MODEL</button></div>
   <div class="sgrp me-1" style="width:94px"><button class="hot" aria-label="Grid"><svg width="24" height="24" viewBox="0 0 24 24"><path d="M0 6H24M0 12H24M0 18H24M6 0V24M12 0V24M18 0V24" stroke="#fff"/></svg></button>
    <button class="w38" aria-label="Snap"><svg width="18" height="18" viewBox="0 0 18 18"><path d="M1.500 0V18M9 0V18M16.500 0V18" stroke="#ddd" stroke-width="3" stroke-dasharray="3 4.500"/></svg></button><span class="tri tri-lg"></span></div>
   <div class="sgrp" style="width:152px"><button class="w36" aria-label="Ortho"><svg width="24" height="24" viewBox="0 0 24 24"><path d="M1 0V23.500H24M1 16.500H8V24" fill="none" stroke="#ddd"/></svg></button>
    <button class="hot" aria-label="Polar"><svg width="26" height="24" viewBox="0 0 26 24"><circle cx="11" cy="12" r="9.500" fill="none" stroke="#fff"/><path d="M25 12.500H11L21 2" fill="none" stroke="#fff"/><path d="M17 12C17 10 16 8 15 8" stroke="#fff" fill="none"/></svg></button><span class="tri tri-lg mx-1 ms-2"></span>
    <button class="w36 ps-1" aria-label="Isodraft"><svg width="20" height="24" viewBox="0 0 20 24"><path d="M10 0V24" stroke="#3fd37c"/><path d="M1 3L19 21" stroke="#e35b5b"/><path d="M8 10h4v4h-4z" fill="#3b4453" stroke="#fff"/></svg></button><span class="tri tri-lg ms-1"></span></div>
   <div class="sgrp" style="width:92px;gap:2px"><button class="hot" aria-label="Object snap tracking"><svg width="26" height="24" viewBox="0 0 26 24"><path d="M18 3L1 21.500H25" fill="none" stroke="#fff"/><path d="M7 10h4v4h-4z" fill="#fff"/></svg></button>
    <button class="hot" aria-label="Object snap"><svg width="26" height="26" viewBox="0 0 26 26"><path d="M1 1H7V7H1ZM10 4.500H24.500V24.500H4V10" fill="none" stroke="#fff" stroke-width="1.500"/></svg></button><span class="tri tri-lg ms-1"></span></div>
   <div class="sgrp ms-1" style="width:156px"><button class="hot" aria-label="Annotation visibility"><svg width="26" height="26" viewBox="0 0 26 26" fill="#fff"><use href="#rocket" x="-1" y="2"/><circle cx="20" cy="6" r="4" fill="none" stroke="#fff"/></svg></button>
    <button class="w38" aria-label="Auto scale"><svg width="26" height="26" viewBox="0 0 26 26" fill="#ddd"><use href="#rocket" x="-1" y="2"/><path d="M20 0L15 7H18L16 12 22 5H19L22 0Z" fill="#ddd"/></svg></button>
    <button class="w34" aria-label="Annotation scale"><svg width="24" height="24" viewBox="0 0 24 24" fill="#ddd"><use href="#rocket"/></svg></button>
    <button class="ms-2 gap-1">1:1<span class="tri tri-lg"></span></button></div>
   <div class="sgrp" style="width:58px"><button class="w38" aria-label="Workspace"><svg width="24" height="24" viewBox="0 0 24 24"><circle cx="12" cy="12" r="7" fill="none" stroke="#ddd" stroke-width="5"/><circle cx="12" cy="12" r="10" fill="none" stroke="#ddd" stroke-width="4" stroke-dasharray="4 3.850"/></svg></button><span class="tri tri-lg"></span></div>
   <div class="sgrp"><button class="w34" aria-label="Annotation monitor"><svg width="24" height="24" viewBox="0 0 24 24"><path d="M0 12H24M12 0V24" stroke="#ddd" stroke-width="2"/></svg></button></div>
   <div class="sgrp ms-1"><button class="w36" aria-label="Isolate objects"><svg width="24" height="24" viewBox="0 0 24 24"><path d="M1 0H10V9H1ZM10 14L15 24H5Z" fill="none" stroke="#ddd"/><circle cx="18" cy="11" r="5" fill="none" stroke="#ddd"/></svg></button></div>
   <div class="sgrp sliver"></div>
   <div class="sgrp" style="width:72px"><button class="w36" aria-label="Clean screen"><svg width="24" height="18" viewBox="0 0 24 18"><path d="M1 1H23V17H1Z" fill="none" stroke="#ddd"/><path d="M20 3V8L14 3ZM4 15V10L10 15Z" fill="#ddd"/><path d="M13 8L19 4M5 14L11 10" stroke="#ddd"/></svg></button><button class="w36" aria-label="Customization"><svg width="24" height="20" viewBox="0 0 24 20"><path d="M0 1.500H24M0 10H24M0 18.500H24" stroke="#ddd" stroke-width="3"/></svg></button></div>
  </div>
 </div>
 <div class="foot-edge"></div>
</footer>
</main>

<nav class="taskbar d-flex" aria-label="Taskbar">
 <button class="tb" aria-label="Widgets"><svg viewBox="0 0 36 36"><path d="M26 8H34V30H26Z" fill="#1160c5"/><rect x="2" y="3" width="28" height="28" rx="4" fill="#25a3dd"/><path d="M8 9V19M16 15V19M22 12V19" stroke="#fff" stroke-width="4" stroke-linecap="round"/><path d="M7 25H25" stroke="#19cfe8" stroke-width="4" stroke-linecap="round"/></svg></button>
 <div class="d-flex apps">
  <button class="tb" aria-label="Start"><svg viewBox="0 0 36 36"><path d="M1 1H17.500V17H1ZM18.500 1H35V17H18.500ZM1 18.500H17.500V35H1ZM18.500 18.500H35V35H18.500Z" fill="url(#win1)"/></svg></button>
  <button class="tb" aria-label="Search"><svg viewBox="0 0 36 36"><circle cx="16" cy="15" r="12.500" fill="#5a6f72" stroke="#e8e8e8" stroke-width="3"/><path d="M25 24L33 33" stroke="#ddd" stroke-width="4" stroke-linecap="round"/></svg></button>
  <button class="tb" aria-label="Task view"><svg viewBox="0 0 36 36"><path d="M0 12H26V34H0Z" fill="#666"/><path d="M9 2H36V26H9Z" fill="#f0f0f0"/><path d="M9 12H26V26H9Z" fill="#b9b9b9"/></svg></button>
  <button class="tb" aria-label="Chat"><svg viewBox="0 0 36 36"><path d="M2 34V18A16 16 0 1 1 18 34Z" fill="#6a62cf"/><path d="M8 12H21V25H8ZM23 17L28 13V24L23 20Z" fill="#fff"/></svg></button>
  <button class="tb" aria-label="McAfee"><svg viewBox="0 0 36 36"><path d="M2 0L18 9 34 0V27L18 36 2 27ZM10 11V22L18 26 26 22V11L18 16Z" fill="#c02a2b" fill-rule="evenodd"/></svg></button>
  <button class="tb run" aria-label="File Explorer"><svg viewBox="0 0 36 36"><path d="M0 2H13L16 6V16H0Z" fill="#d99a0b"/><path d="M0 8H11L15 5H36V34H0Z" fill="url(#fold)"/><path d="M6 34V28Q6 24 10 24H26Q30 24 30 28V34Z" fill="#1479d4"/><path d="M11 29H25" stroke="#0b4da2" stroke-width="2"/></svg></button>
  <button class="tb" aria-label="myHP"><svg viewBox="0 0 36 36"><rect width="36" height="36" rx="2" fill="#0896d5"/><text x="2" y="21" font-size="11" fill="#fff" font-family="Open Sans,sans-serif">my</text><text x="17" y="22" font-size="15" font-style="italic" font-weight="700" fill="#fff" font-family="Lato,sans-serif">hp</text></svg></button>
  <button class="tb" aria-label="Edge"><svg viewBox="0 0 36 36"><path d="M0 17C2 6 10 0 19 0 29 0 36 7 36 15 36 22 31 25 26 24 21 24 21 21 23 19 24 13 18 9 12 9 6 9 2 12 0 17Z" fill="url(#edge1)"/><path d="M0 17C2 12 8 9 13 10 18 11 22 14 22 18 14 14 10 30 28 33 22 36 16 37 10 34 3 30 0 24 0 17Z" fill="#0f7fd3"/><path d="M14 17C8 28 22 38 34 26 31 28 22 29 19 22 18 19 20 17 20 16 18 14 15 15 14 17Z" fill="#1451a0"/></svg></button>
  <button class="tb" aria-label="WPS Office"><svg viewBox="0 0 36 36"><path d="M0 5H11V9H7L12 24 16 12 20 20 16 32H10L2 10Z" fill="#f22a24"/><path d="M13 5H27L17 32H10L18 9H13Z" fill="#ff6b2b"/><path d="M25 5H36V9L28 32H20L24 18 26 22 30 9H24Z" fill="#f5301f"/></svg></button>
  <button class="tb" aria-label="Help"><svg viewBox="0 0 36 36"><path d="M0 0H36V36H0Z" fill="#2b8497"/><circle cx="18" cy="18" r="17" fill="#0d95da" stroke="#fff" stroke-width="2"/><text x="18" y="29" text-anchor="middle" font-size="31" font-weight="700" fill="#fff" font-family="Liberation Sans,sans-serif">?</text></svg></button>
  <button class="tb" aria-label="Store"><svg viewBox="0 0 36 36"><path d="M9 6V2H27V6" fill="none" stroke="#29a5e5" stroke-width="2"/><rect y="5" width="35" height="30" rx="3" fill="#174d9b"/><path d="M10 13H17V20H10Z" fill="#f25022"/><path d="M18 13H25V20H18Z" fill="#7fba00"/><path d="M10 21H17V28H10Z" fill="#00a4ef"/><path d="M18 21H25V28H18Z" fill="#ffb900"/></svg></button>
  <button class="tb" aria-label="Opera"><svg viewBox="0 0 36 36"><path d="M18 1A17 17 0 1 0 18 35A17 17 0 1 0 18 1ZM18 6C23 6 26 11 26 18S23 30 18 30 10 25 10 18 13 6 18 6Z" fill="url(#opera1)" fill-rule="evenodd"/></svg></button>
  <button class="tb run" aria-label="WhatsApp"><svg viewBox="0 0 36 36"><path d="M1 35L3 26A16.500 16.500 0 1 1 10 33Z" fill="#7d868a" stroke="#fff" stroke-width="2.500"/><path d="M12 9C8 13 10 18 15 23 20 27 25 27 27 23L22 20 20 22C17 21 15 18 14 16L16 14 14 9Z" fill="#fff"/></svg></button>
  <button class="tb run" aria-label="Chrome"><svg viewBox="0 0 36 36"><circle cx="18" cy="18" r="18" fill="#fcc21b"/><path d="M18 18L2 9A18 18 0 0 1 34 9H18Z" fill="#e33b2e"/><path d="M18 18H18L26 22 18 36A18 18 0 0 1 2 9L10 22Z" fill="#2a9a46"/><circle cx="18" cy="18" r="9" fill="#fff"/><circle cx="18" cy="18" r="7" fill="#3b7ded"/></svg></button>
  <button class="tb run" aria-label="Word"><svg viewBox="0 0 36 36"><path d="M8 2H36V10H8Z" fill="#41a5ee"/><path d="M8 10H36V18H8Z" fill="#2b7cd3"/><path d="M8 18H36V26H8Z" fill="#185abd"/><path d="M8 26H36V35H8Z" fill="#103f91"/><rect y="9" width="18" height="18" rx="2" fill="#185abd"/><text x="9" y="23" text-anchor="middle" font-size="14" font-weight="700" fill="#fff" font-family="Open Sans,sans-serif">W</text></svg></button>
  <button class="tb run" aria-label="Spotify"><svg viewBox="0 0 36 36"><circle cx="18" cy="18" r="17" fill="#1ed760"/><path d="M7 12Q19 8 29 14M8 18Q18 15 27 20M9 24Q18 21 25 25" fill="none" stroke="#111" stroke-width="3" stroke-linecap="round"/></svg></button>
  <button class="tb run" aria-label="Control Panel"><svg viewBox="0 0 36 36"><rect y="4" width="36" height="27" rx="2" fill="#1fa3e6"/><path d="M3 7H33V28H3Z" fill="#b9e6fb"/><circle cx="12" cy="16" r="7" fill="#1e8fd8"/><path d="M12 16V8A8 8 0 0 1 19 15Z" fill="#f58a1d"/><path d="M24 11h6M24 16h6M24 21h6" stroke="#1e8fd8" stroke-width="2"/><path d="M5 26H17" stroke="#f58a1d" stroke-width="2"/><path d="M19 26H30" stroke="#1e8fd8" stroke-width="2"/></svg></button>
  <button class="tb now" aria-label="AutoCAD"><svg viewBox="0 0 36 36"><path d="M0 0H36V36H0Z" fill="#f9e9e2"/><text x="18" y="31" text-anchor="middle" font-family="Liberation Sans,sans-serif" font-weight="700" font-size="36" fill="url(#redA)">A</text></svg></button>
 </div>
 <div class="tray d-flex align-items-center ms-auto me-4 pe-1">
  <button class="me-3" aria-label="Hidden icons"><svg width="16" height="10" viewBox="0 0 16 10"><path d="M1 9L8 2 15 9" fill="none" stroke="#fff" stroke-width="2"/></svg></button>
  <div class="text-center me-3 ms-1">ENG<br>IN</div>
  <svg width="24" height="20" viewBox="0 0 24 20" fill="none" stroke="#fff" stroke-width="1.500"><path d="M1 7Q12-4 23 7M4 11Q12 2 20 11M8 14Q12 9 16 14"/><circle cx="12" cy="17" r="1.500" fill="#fff"/></svg>
  <svg width="24" height="20" viewBox="0 0 24 20" fill="none" stroke="#fff" stroke-width="1.500"><path d="M1 7H5L11 2V18L5 13H1ZM14 7Q16 10 14 13M17 4Q21 10 17 16M20 2Q26 10 20 18"/></svg>
  <svg width="24" height="20" viewBox="0 0 24 20"><path d="M9 3H21V17H5V10" fill="none" stroke="#fff" stroke-width="1.500"/><path d="M7 9L14 6V15H7ZM22 8h2v4h-2z" fill="#fff"/><path d="M5 0L0 8H4L2 13 8 6H5Z" fill="#fff"/></svg>
  <div class="clock">10:47<br>12-06-2023</div>
  <span class="note cell">18</span>
 </div>
</nav>

<script>
const NS='http://www.w3.org/2000/svg';
const grid=document.getElementById('gridlines'), bld=document.getElementById('building');
function add(parent,tag,attrs){const e=document.createElementNS(NS,tag);for(const k in attrs)e.setAttribute(k,attrs[k]);parent.appendChild(e);return e}
const snap=v=>Math.round(v)+.5;

// drafting grid: minor lines every fifth of a major cell, centred on the UCS origin
(function(){
 let minor='',major='';
 for(let k=-60;k<=60;k++){const x=snap(964+k*17.14);if(x>5&&x<1911){if(k%5)minor+=`M${x} 266V960`;else major+=`M${x} 266V960`}}
 for(let k=-30;k<=16;k++){const y=snap(713+k*17.14);if(y>265&&y<960){if(k%5)minor+=`M6 ${y}H1910`;else major+=`M6 ${y}H1910`}}
 add(grid,'path',{d:minor,stroke:'#262e38'});add(grid,'path',{d:major,stroke:'#30384a'});
 add(grid,'path',{d:'M964.5 266V638',stroke:'#1c7a24'});add(grid,'path',{d:'M1040 713.5H1910',stroke:'#7a2a30'});
})();

let out='',solid='',dark='';
const R=(x1,y1,x2,y2)=>{out+=`M${snap(x1)} ${snap(y1)}H${snap(x2)}V${snap(y2)}H${snap(x1)}Z`};
const H=(x1,x2,y)=>{out+=`M${snap(x1)} ${snap(y)}H${snap(x2)}`};
const V=(x,y1,y2)=>{out+=`M${snap(x)} ${snap(y1)}V${snap(y2)}`};
const F=(x1,y1,x2,y2)=>{solid+=`M${x1} ${y1}H${x2}V${y2}H${x1}Z`};
const D=(x1,y1,x2,y2)=>{dark+=`M${x1} ${y1}H${x2}V${y2}H${x1}Z`};
const C=(x,y,r)=>{out+=`M${x-r} ${y}a${r} ${r} 0 1 0 ${2*r} 0a${r} ${r} 0 1 0 ${-2*r} 0`};

function niche(x,y,w,h){           // narrow filled niche
 R(x,y,x+w,y+h);F(x+2,y+4,x+w-1,y+h);D(x+w/2,y+2,x+w/2+1,y+6);D(x+2,y+2,x+3,y+5)
}
function archway(x,y,w,h){         // pointed arch in a frame
 R(x,y,x+w,y+h);const m=x+w/2;
 F(x+2,y+6,x+5,y+h);F(x+w-4,y+6,x+w-1,y+h);
 solid+=`M${x+3} ${y+8}L${m} ${y+1}L${x+w-2} ${y+8}L${x+w-5} ${y+10}L${m} ${y+5}L${x+5} ${y+10}Z`
}
function brackets(x,y,w,h){
 H(x,x+w,y);H(x+3,x+w-3,y+h);const m=x+w/2;R(m-4,y+1,m+3,y+h);
 [8,15,22].forEach(o=>{out+=`M${m-o} ${y}Q${m-o+3} ${y+h/2} ${m-o+4} ${y+h}M${m-o+3} ${y}Q${m-o+6} ${y+h/2} ${m-o+6} ${y+h}M${m+o} ${y}Q${m+o-3} ${y+h/2} ${m+o-4} ${y+h}M${m+o-3} ${y}Q${m+o-6} ${y+h/2} ${m+o-6} ${y+h}`})
}
function arcade(x,y){niche(x,y,8,20);niche(x+10,y,8,20);archway(x+20,y,16,20);niche(x+39,y,8,20);niche(x+49,y,8,20)}
function finial(cx,y){
 out+=`M${cx+.5} ${y}L${cx-2} ${y+15}M${cx+.5} ${y}L${cx+2} ${y+15}`;C(cx,y+16,3);C(cx,y+16,1);C(cx,y+25,6);C(cx,y+25,7);
}
function dome(cx,y){
 for(const [rx,h] of [[27,36],[26,35],[24,33]])out+=`M${cx-rx+.5} ${y+68}C${cx-rx} ${y+47} ${cx-12} ${y+68-h} ${cx+.5} ${y+68-h}S${cx+rx} ${y+47} ${cx+rx-.5} ${y+68}`;
}
function towerTop(cx,y){           // finial, dome, upper room, gallery
 finial(cx,y);dome(cx,y);F(cx-27,y+67,cx+28,y+73);
 for(let i=-24;i<26;i+=5)D(cx+i,y+68,cx+i+1,y+69);
 brackets(cx-26,y+74,53,11);
 R(cx-24,y+85,cx+24,y+115);R(cx-22,y+87,cx+22,y+113);
 niche(cx-18,y+96,8,17);F(cx-7,y+94,cx+10,y+98);archway(cx-6,y+96,15,17);niche(cx+11,y+96,8,17);
 for(let i=-30;i<30;i+=8)out+=`M${cx+i+.5} ${y+127}V${y+118}Q${cx+i+3} ${y+114} ${cx+i+6.5} ${y+118}V${y+127}`;
 R(cx-31,y+127,cx+32,y+132);R(cx-27,y+134,cx+31,y+138);
 arcade(cx-26,y+139);
 R(cx-29,y+161,cx+32,y+164);brackets(cx-25,y+166,53,11);
}
function frontTower(cx){
 towerTop(cx,317);const x=cx-686,r=(a,b,c,d)=>R(a+x,b,c+x,d),h=(a,b,y)=>H(a+x,b+x,y);
 h(661,713,496);h(663,712,498);h(663,711,499);
 for(let i=0;i<7;i++)r(663+i*7,501,667+i*7,515);
 r(663,516,711,571);h(663,711,527);[664,666,668,680,697,706,709].forEach(v=>V(v+x,527,571));V(681+x,527,571);V(696+x,527,571);
 r(660,571,716,575);r(660,578,716,588);
 [671,683,696,708].forEach(v=>{solid+=`M${v+x-4} 583a4 4.500 0 1 0 9 0a4 4.500 0 1 0 -9 0`});
 h(655,722,589);out+=`M${655+x} 589L${662+x} 594H${716+x}L${722+x} 589`;h(660,718,591);
 arcade(660+x,596);h(661,717,617);h(663,715,619);h(663,715,622);out+=`M${661+x} 617L${665+x} 622M${717+x} 617L${713+x} 622`;
 arcade(660+x,625);
 r(659,646,719,650);r(665,653,712,655);r(659,656,719,659);brackets(663+x,661,53,12);
 h(662,715,675);h(663,714,677);h(664,713,680);r(666,683,712,688);r(666,690,712,693);r(666,694,712,699);
 for(let i=668;i<711;i+=4)F(i+x,691,i+x+2,693);
 r(668,703,714,788);h(668,714,708);r(668,708,673,787);r(676,708,682,787);r(685,708,698,787);r(701,708,707,787);V(711+x,709,787);
}
function casement(x,y,w,h,ky){     // framed window with side hinges
 R(x,y,x+w,y+h);R(x+2,y+4,x+w-3,y+h-2);V(x+5,y+8,y+h-2);V(x+8,y+8,y+h-2);V(x+w-6,y+8,y+h-2);V(x+w-9,y+8,y+h-2);F(x+7,y+12,x+9,y+h-2);
 C(x+5,y+9,3);solid+=`M${x+2} ${y+6}h7v5h-4z M${x+w-8} ${y+6}h7v7h-3z`;
 out+=`M${x+9} ${y+16}Q${x+10} ${y+9} ${x+w/2} ${y+6}Q${x+w-9} ${y+9} ${x+w-8} ${y+16}M${x+10} ${y+10}L${x+w/2} ${y+6}L${x+w-9} ${y+10}`;
 R(x-2,ky,x+8,ky+7);R(x+w-6,ky,x+w+2,ky+7);F(x+5,ky,x+8,ky+8)
}
function medallion(x,y,r){
 solid+=`M${x-r} ${y}a${r} ${r} 0 1 0 ${2*r} 0a${r} ${r} 0 1 0 ${-2*r} 0`;
 const n=r>9?12:6;
 for(let a=0;a<n;a++){const px=Math.round(x+Math.cos(a*6.283/n)*r*.62),py=Math.round(y+Math.sin(a*6.283/n)*r*.62);D(px,py,px+1,py+1)}
 D(x-.5,y-.5,x+1,y+1)
}
frontTower(686);frontTower(993);
// rear right minaret
towerTop(930,325);R(909,502,956,510);
// rear left minaret, mostly hidden behind the front one
finial(704,311);
out+='M691.5 350Q704 340 716 347Q731 356 731.5 380M694 351Q704 343 715 349Q728 357 729.500 380M692.500 347Q706 338 718 346Q733 356 732.500 380';
F(714,378,733,380);R(714,380,731,383);H(717,734,385);H(716,733,397);V(733,396,426);V(731,398,425);R(720,407,729,425);F(724,410,728,425);H(716,733,424);
V(716,386,396);V(720,386,396);V(725,386,396);V(729,386,396);R(719,427,723,438);R(726,427,731,438);R(719,440,731,444);R(719,446,731,450);R(723,452,731,469);F(725,455,729,469);H(718,733,473);H(718,733,476);
out+='M720.500 477V490M727 477L724 490M733 477L729 490';H(716,731,491);H(716,731,494);R(715,497,730,505);

// parapet, medallion frieze
R(713,513,969,521);R(716,542,966,549);V(714,513,549);V(967,521,545);
[721,748,775,803,830,857,884,911,939].forEach(x=>{R(x,524,x+18,539);medallion(x+9.500,532,7);F(x+2,526,x+4,528);F(x+15,526,x+17,528);F(x+2,536,x+4,538);F(x+15,536,x+17,538)});
[720,744,769,794,818,843,868,893,917,942].forEach(x=>archway(x,552,16,19));
R(724,574,962,593);[738,755,771,787,805,823,840,856,873,890,907,925,946].forEach(x=>medallion(x+.5,583.5,7.5));
R(723,597,964,615);H(733,958,595);
for(let x=733;x<957;x+=7){F(x,596,x+5,601);F(x+1,601,x+8,604);F(x+1,605,x+3,611);F(x+4,605,x+5,611);D(x+3,598,x+4,600)}
[[727,618],[762,618],[796,619],[834,622],[867,621],[900,622],[932,622]].forEach(([x,y])=>casement(x,y,25,668-y,644));
H(727,960,669);for(let x=730;x<960;x+=9)out+=`M${x} 670L${x+2} 675H${x+4}L${x+5} 670M${x+1.500} 671V675M${x+3.500} 671V675`;
casement(725,677,26,46,699);casement(725,729,25,47,751);casement(932,681,26,47,703);casement(933,732,25,47,754);
[768,776,785,893,902,911].forEach(x=>R(x,692,x+5,788));
medallion(804.5,691,10);medallion(878,692,10);
R(620,788,1066,800);

add(bld,'path',{d:out});add(bld,'path',{d:solid,fill:'#fff',stroke:'none'});add(bld,'path',{d:dark,fill:'#212830',stroke:'none'});
// gateway
add(bld,'path',{d:'M809 788V714Q823 699 840 694Q858 699 871 714V788H861V719Q853 709 840 704Q827 709 820 719V788Z',fill:'#000',stroke:'none'});
add(bld,'path',{d:'M802.500 788V712Q819 692 840.500 686.500Q862 692 878.500 716V788M805.500 788V714Q821 694 840.500 689.500Q860 695 875.500 717V788M808.500 788V714Q822 698 840.500 692.500Q858 698 871.500 716V788M819.500 788V719Q827 708 840.500 704.500Q853 708 861.500 719V788'});
// UCS icon, point mark, crosshair
add(bld,'path',{d:'M964.500 638V713.500H1040M959.500 706.500H971.500V719.500H959.500ZM1044 693L1063 712M1063 693L1044 712M1259 474.500H1303M1312 474.500H1356M1307.500 426V470M1307.500 479V523M1303.500 470.500H1311.500V478.500H1303.500Z'});
</script>
</body>
</html>
